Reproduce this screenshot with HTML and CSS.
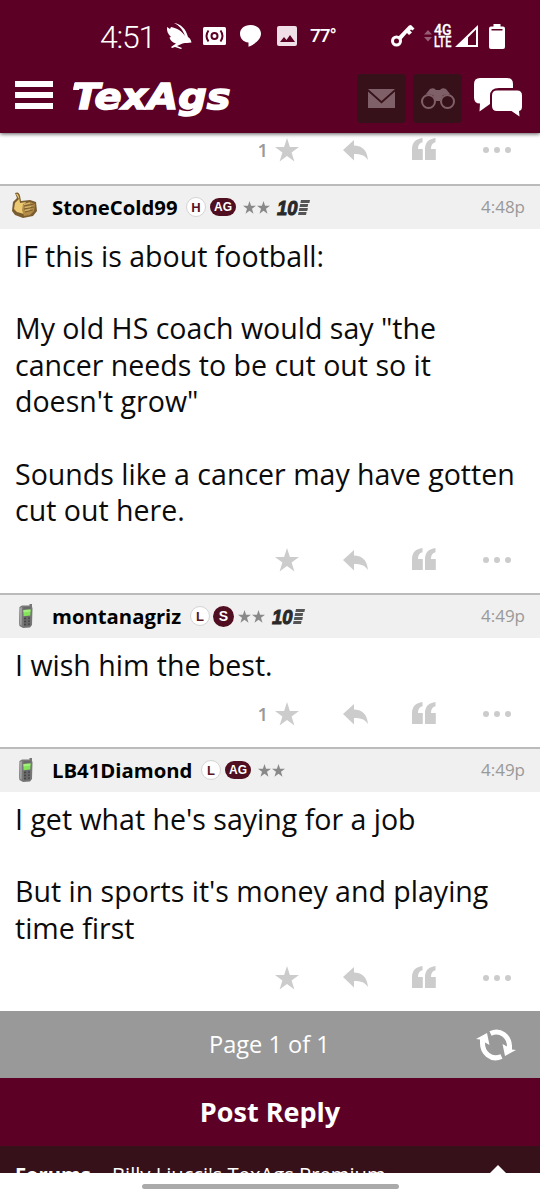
FILE: index.html
```html
<!DOCTYPE html>
<html lang="en">
<head>
<meta charset="utf-8">
<title>TexAgs</title>
<link rel="stylesheet" href="styles.css">
</head>
<body>
<svg class="defs" aria-hidden="true">
  <symbol id="star" viewBox="0 0 24 24"><path d="M12 0l2.900 8.900H24l-7.400 5.500 2.800 9L12 17.900l-7.400 5.500 2.800-9L0 8.900h9.100z"/></symbol>
  <symbol id="reply" viewBox="0 0 25 21"><path d="M0 10L11 0v5.500C18 5.500 24 9 25 20c-3-4.500-7-6-14-6v6.500z"/></symbol>
  <symbol id="quote" viewBox="0 0 25 22"><path d="M0 22V11C0 4.500 4 .8 10.500 0v4.200C7.500 5 5.900 7.200 6 11h4.800v11zM13 22V11C13 4.500 17 .8 23.500 0v4.200C20.500 5 18.900 7.200 19 11h4.800v11z"/></symbol>
  <symbol id="dots" viewBox="0 0 28 6"><circle cx="3" cy="3" r="3"/><circle cx="14" cy="3" r="3"/><circle cx="25" cy="3" r="3"/></symbol>
  <symbol id="phone" viewBox="0 0 16 25">
    <path d="M11.500 0H14v3l.5 1-.5 17-2 2.500-7 .5-3.500-2L1 19 1.500 3 4 1.500h7.500z" fill="#777"/>
    <path d="M2 4L1.600 20l2 2L4 3z" fill="#a2a2a2"/><path d="M5.500 3h7l-.4 19-6.100.5z" fill="#696969"/>
    <path d="M5.500 6l7-.5-.2 6-6.800.7z" fill="#83e35a"/><path d="M5.500 6l7-.5v2l-7 1z" fill="#a3f07c"/>
    <path d="M6 14.500h2m2-.3h2M6 17.500h2m2-.3h2M6 20.500h2m2-.3h2" stroke="#444" stroke-width="1.300"/>
  </symbol>
</svg>

<header class="top">
  <div class="status">
    <span class="clock">4:51</span>
    <svg class="bird" width="26" height="27" viewBox="0 0 26 27"><path d="M8 0c7 1 12 6 14 14 2 1 3 3 3.500 5.500-3 .5-6 .3-9 1L11 23l5 2-1 1-6-2-3 1-1-1 5-3.500C6 19.500 4 17 3.500 14.500L5 14C2 11 .5 8 1 4l3 2 1-2c6 1 11 4 14 9C17 7 13 2 8 0z"/></svg>
    <svg class="cam" width="23" height="18" viewBox="0 0 23 18"><rect width="23" height="18" rx="1.500"/><g fill="none" stroke="#5c0025" stroke-width="2"><circle cx="11.500" cy="9" r="3"/><path d="M5.500 3.500q-4 5.500 0 11M17.500 3.500q4 5.500 0 11"/></g></svg>
    <svg class="bubble" width="21" height="22" viewBox="0 0 21 22"><path d="M10.500 0C17 0 21 4 21 8.500c0 6-6 10.500-12.500 13.200V17.500C3 17 0 13 0 8.700 0 4 4 0 10.500 0z"/></svg>
    <svg class="pic" width="20" height="20" viewBox="0 0 20 20"><rect width="20" height="20" rx="2" fill="#f0dfe6"/><path d="M3 16l4-5 2.500 3 3.500-5 5 7z" fill="#5c0025"/></svg>
    <span class="temp">77°</span>
    <svg class="key" width="24" height="22" viewBox="0 0 24 22"><circle cx="5.500" cy="16" r="4" fill="none" stroke="#fff" stroke-width="3"/><path d="M7 12L18 .5l2-.5 3.500 3.500-2 2-1.500-1-1 1 2 2-3 2.500-2-2-6 7z"/></svg>
    <svg class="updown" width="8" height="12" viewBox="0 0 8 12"><path d="M0 4.500L4 0l4 4.500zM0 7h8l-4 4.500z" fill="#965d74"/></svg>
    <svg class="net" width="19" height="27" viewBox="0 0 19 27"><text x="0" y="12" textLength="17.500" lengthAdjust="spacingAndGlyphs">4G</text><text x="0" y="24" textLength="17.500" lengthAdjust="spacingAndGlyphs">LTE</text></svg>
    <svg class="signal" width="23" height="22" viewBox="0 0 23 22"><path fill-rule="evenodd" d="M0 22L23 0v22zM13 12.500V20h8V4.500z"/></svg>
    <svg class="battery" width="16" height="25" viewBox="0 0 16 25"><path fill-rule="evenodd" d="M4.500 0h7v2.500H14q2 0 2 2V23q0 2-2 2H2q-2 0-2-2V4.500q0-2 2-2h2.500zM2.500 5v1.500h11V5z"/></svg>
  </div>
  <nav class="bar">
    <div class="menu"><i></i><i></i><i></i></div>
    <svg class="logo" width="160" height="38" viewBox="0 0 160 38"><text x="-.5" y="28" textLength="158" lengthAdjust="spacingAndGlyphs">TexAgs</text><path d="M1.500 2h6L6 9H0z"/></svg>
    <div class="tile"><svg width="27" height="19" viewBox="0 0 27 19"><path d="M0 0h27L13.500 12z"/><path d="M0 2.500l13.500 12 13.500-12V19H0z"/></svg></div>
    <div class="tile second"><svg width="34" height="21" viewBox="0 0 34 21"><path d="M5 6L9 1q4-2 6 1h4q2-3 6-1l4 5-7 1-3 6h-4l-3-6z"/><g fill="#37111a" stroke="#806068" stroke-width="2"><circle cx="7.500" cy="13.500" r="6.500"/><circle cx="26.500" cy="13.500" r="6.500"/></g></svg></div>
    <svg class="chat" width="48" height="40" viewBox="0 0 48 40"><path d="M6 0h27q6 0 6 6v4H25q-9 0-9 8v8L5.500 33.500l.5-8q-6 0-6-6V6q0-6 6-6z"/><path d="M23 12.500h20q5 0 5 5v11q0 4-3 4.500l.5 5.500-8-5.500H23q-5 0-5-5v-10.500q0-5 5-5z"/></svg>
  </nav>
</header>

<main class="thread">
  <div class="actions partial"><span class="count">1</span><svg class="a-star"><use href="#star"/></svg><svg class="a-reply"><use href="#reply"/></svg><svg class="a-quote"><use href="#quote"/></svg><svg class="a-dots"><use href="#dots"/></svg></div>

  <article class="post first">
    <div class="head">
      <span class="avatar"><svg class="thumb" width="27" height="26" viewBox="0 0 27 26"><path d="M4 1q4-2 5 3l1 5 9-1 6 2 1 9-4 5-10 2-8-3-3-4 1-9 4-4z" fill="#7a5c2e"/><path d="M5 2q2-1 3 3l1 6 6-1-3 4 1 8-7-2-3-3 1-6 4-4z" fill="#ecca74"/><path d="M12 12l7-2 5 2-1 7-4 4-6 1-2-6z" fill="#b38a48"/><path d="M13 14l10-2M13 17l10-2M14 20l8-2" stroke="#77602f" stroke-width="1"/><path d="M13 12.500l6-1.500M14 15.500l6-1M14 18.500l5-1" stroke="#dcbd70"/></svg></span>
      <b class="name n1">StoneCold99</b><span class="badge ring">H</span><span class="badge pill">AG</span>
      <span class="stars"><svg><use href="#star"/></svg><svg><use href="#star"/></svg></span>
      <svg class="ten" viewBox="0 0 33 15"><text x="0" y="15" textLength="20.500" lengthAdjust="spacingAndGlyphs">10</text><path d="M24 0h9l-.6 3h-9zM23.200 4h8l-.6 3h-8zM22.400 8h8.500l-.6 3h-8.500zM21.600 12h8l-.6 3h-8z"/></svg>
      <time>4:48p</time>
    </div>
    <div class="text"><p>IF this is about football:</p><p><br></p><p>My old HS coach would say "the</p><p>cancer needs to be cut out so it</p><p>doesn't grow"</p><p><br></p><p>Sounds like a cancer may have gotten</p><p>cut out here.</p></div>
    <div class="actions"><span class="count"></span><svg class="a-star"><use href="#star"/></svg><svg class="a-reply"><use href="#reply"/></svg><svg class="a-quote"><use href="#quote"/></svg><svg class="a-dots"><use href="#dots"/></svg></div>
  </article>

  <article class="post second-post">
    <div class="head">
      <span class="avatar"><svg width="16" height="25"><use href="#phone"/></svg></span>
      <b class="name n2">montanagriz</b><span class="badge ring">L</span><span class="badge disc">S</span>
      <span class="stars tight"><svg><use href="#star"/></svg><svg><use href="#star"/></svg></span>
      <svg class="ten" viewBox="0 0 33 15"><text x="0" y="15" textLength="20.500" lengthAdjust="spacingAndGlyphs">10</text><path d="M24 0h9l-.6 3h-9zM23.200 4h8l-.6 3h-8zM22.400 8h8.500l-.6 3h-8.500zM21.600 12h8l-.6 3h-8z"/></svg>
      <time>4:49p</time>
    </div>
    <div class="text"><p>I wish him the best.</p></div>
    <div class="actions"><span class="count">1</span><svg class="a-star"><use href="#star"/></svg><svg class="a-reply"><use href="#reply"/></svg><svg class="a-quote"><use href="#quote"/></svg><svg class="a-dots"><use href="#dots"/></svg></div>
  </article>

  <article class="post third">
    <div class="head">
      <span class="avatar"><svg width="16" height="25"><use href="#phone"/></svg></span>
      <b class="name n3">LB41Diamond</b><span class="badge ring">L</span><span class="badge pill">AG</span>
      <span class="stars"><svg><use href="#star"/></svg><svg><use href="#star"/></svg></span>
      <time>4:49p</time>
    </div>
    <div class="text"><p>I get what he's saying for a job</p><p><br></p><p>But in sports it's money and playing</p><p>time first</p></div>
    <div class="actions"><span class="count"></span><svg class="a-star"><use href="#star"/></svg><svg class="a-reply"><use href="#reply"/></svg><svg class="a-quote"><use href="#quote"/></svg><svg class="a-dots"><use href="#dots"/></svg></div>
  </article>
</main>

<div class="pager"><span>Page 1 of 1</span>
  <svg class="refresh" width="40" height="32" viewBox="0 0 40 32"><g fill="none" stroke="#fff" stroke-width="5"><path d="M14.500 4.500C24 0 34 7 33.500 19"/><path d="M25.500 27.500C15 32 6 24 6.500 13"/></g><path d="M0 10L11 4l2.500 12-4.500-2.500L4 15v-4.500zM40 21l-11 6-2.500-12 4.500 2.500 5-1.500v4.500z"/></svg>
</div>
<div class="post-reply">Post Reply</div>
<div class="crumbs"><b>Forums</b><span>Billy Liucci's TexAgs Premium</span><svg width="20" height="16" viewBox="0 0 20 16"><path d="M10 0l10 10H0z"/></svg></div>
<footer class="gesture"><i></i></footer>
</body>
</html>
```
FILE: styles.css
```css
* { box-sizing: border-box; }
body { margin: 0; width: 540px; height: 1200px; overflow: hidden; background: #fff; color: #0b0b0b; font-family: "Open Sans", sans-serif; }
svg { display: block; flex: none; }
p { margin: 0; }
.defs { position: absolute; width: 0; height: 0; }

.top { position: relative; height: 133px; background: #5c0025; fill: #fff; color: #fff; box-shadow: 0 1px 4px rgba(0,0,0,.65); }
.status { display: flex; align-items: flex-start; height: 65px; padding-left: 100px; font-family: Roboto, sans-serif; white-space: nowrap; }
.status > * { flex: none; }
.clock { width: 66px; margin-top: 18px; font-size: 32px; line-height: 38px; font-weight: 300; letter-spacing: -1.200px; }
.bird { margin-top: 23px; }
.cam { margin: 27px 0 0 11px; }
.bubble { margin: 25px 0 0 14px; }
.pic { margin: 26px 0 0 16px; }
.temp { width: 82px; padding-left: 13px; margin-top: 25px; font-size: 19px; line-height: 22px; font-weight: 500; letter-spacing: -1px; }
.key { margin: 25px 0 0 12px; }
.updown { margin: 30px 0 0 9px; }
.net { margin: 23px 0 0 2px; overflow: visible; }
.net text { font: 500 15px Roboto, sans-serif; stroke: #fff; stroke-width: .3px; }
.signal { margin: 25px 0 0 2px; }
.battery { margin: 24px 0 0 11px; }

.bar { display: flex; align-items: flex-start; padding-left: 15px; }
.menu { display: grid; gap: 5px; width: 38px; margin-top: 16px; }
.menu i { height: 6px; background: #fff; }
.logo { margin: 16px 0 0 20px; overflow: visible; }
.logo text { font: italic bold 35px "DejaVu Sans", sans-serif; stroke: #fff; stroke-width: 1.500px; }
.tile { display: grid; place-items: center; width: 49px; height: 49px; margin: 9px 0 0 124px; border-radius: 4px; background: #37111a; fill: #806068; }
.tile.second { margin-left: 7px; }
.chat { margin: 13px 0 0 12px; }

.thread { height: 878px; }
.partial { height: 51px; }
.post { border-top: 2px solid #bbb; }
.first { height: 409px; }
.second-post { height: 154px; }
.third { height: 264px; }
.head { display: flex; align-items: center; height: 43px; background: #f0f0f0; }
.avatar { display: flex; justify-content: flex-end; width: 34px; margin-right: 18px; }
.avatar .thumb { margin-right: -4px; margin-bottom: 5px; }
.name { padding-bottom: 2px; font-size: 20.300px; line-height: 26px; white-space: nowrap; color: #000; }
.n1 { width: 134px; } .n2 { width: 138px; } .n3 { width: 149px; }
.badge { display: grid; place-items: center; height: 20px; margin-bottom: 1px; font: bold 13px "Liberation Sans", sans-serif; }
.ring { width: 20px; border: 1px solid #d4d4d4; border-radius: 50%; background: #fff; color: #591525; }
.pill { width: 26px; height: 18px; margin-left: 4px; border-radius: 9px; background: #500f20; color: #fff; font-size: 12px; }
.disc { width: 21px; height: 21px; margin-left: 3px; border-radius: 50%; background: #500f20; color: #fff; font-size: 14px; }
.stars { display: flex; gap: 1px; margin-left: 7px; fill: #898989; }
.stars.tight { margin-left: 4px; }
.stars svg { width: 13px; height: 13px; }
.ten { width: 33px; height: 15px; margin-left: 7px; fill: #555; overflow: visible; }
.ten text { font: italic bold 20px "Liberation Sans", sans-serif; fill: #292929; stroke: #292929; stroke-width: 1px; }
time { margin-left: auto; margin-right: 15px; padding-bottom: 2px; color: #999; font-size: 17px; line-height: 24px; }
.text { padding: 8.500px 15px 0; font-size: 28.540px; line-height: 36.400px; white-space: nowrap; }
.text p { height: 36.400px; }
.actions { display: grid; grid-template-columns: 275px 68px 69px 71px 28px; align-items: center; height: 63px; fill: #ccc; }
.actions.partial { height: 51px; padding-bottom: 17px; }
.count { padding-right: 7px; text-align: right; color: #999; font-size: 18.500px; font-weight: 600; line-height: 24px; }
.a-star { width: 24px; height: 24px; }
.a-reply { width: 25px; height: 21px; }
.a-quote { width: 25px; height: 22px; margin-top: -2px; }
.a-dots { width: 28px; height: 6px; }

.pager { display: grid; grid-template-columns: 145px 1fr 64px; align-items: center; height: 67px; background: #999; color: #fff; fill: #fff; font-size: 23.600px; }
.pager span { grid-column: 2; padding: 0 0 2px 64px; white-space: nowrap; }
.post-reply { height: 68px; background: #5c0025; color: #fff; text-align: center; font-size: 27px; line-height: 68px; font-weight: 700; }
.crumbs { display: flex; align-items: flex-start; height: 27px; padding: 14px 32px 0 15px; overflow: hidden; background: #37111a; color: #fff; fill: #fff; font-size: 20.200px; line-height: 28px; white-space: nowrap; }
.crumbs b { width: 97px; }
.crumbs svg { margin: 5px 0 0 auto; }
.gesture { display: flex; justify-content: center; height: 27px; padding-top: 11px; background: #fff; }
.gesture i { width: 257px; height: 5px; border-radius: 3px; background: #aaa; }
```
